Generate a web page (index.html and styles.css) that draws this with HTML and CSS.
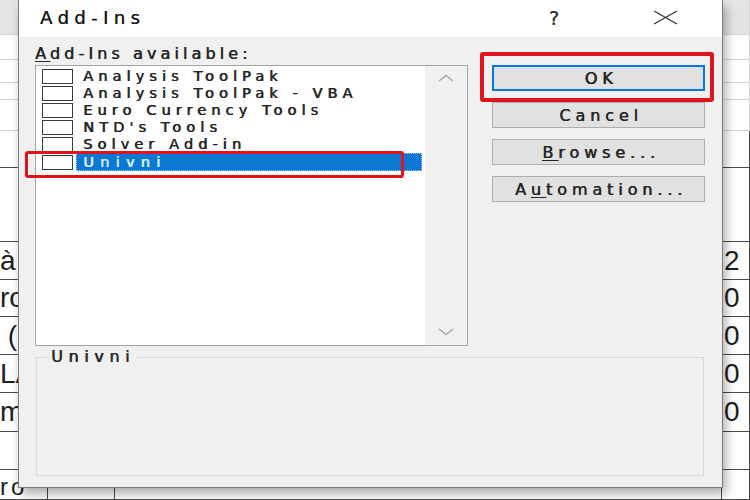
FILE: index.html
```html
<!DOCTYPE html>
<html>
<head>
<meta charset="utf-8">
<link rel="stylesheet" href="styles.css">
</head>
<body>
<div class="sheet">
  <div class="c ca hd"></div><div class="c cb hd"></div><div class="c cc hd"></div><div class="c cd hd"></div>
  <div class="c ca"></div><div class="c cb"></div><div class="c cc"></div><div class="c cd"></div>
  <div class="c ca"></div><div class="c cb"></div><div class="c cc"></div><div class="c cd"></div>
  <div class="c ca"></div><div class="c cb"></div><div class="c cc"></div><div class="c cd"></div>
  <div class="c ca"></div><div class="c cb"></div><div class="c cc"></div><div class="c cd"></div>
  <div class="c ca dk"></div><div class="c cb dk"></div><div class="c cc dk"></div><div class="c cd dk"></div>
  <div class="c ca dk"></div><div class="c cb dk"></div><div class="c cc dk"></div><div class="c cd dk"></div>
  <div class="c ca dk">à</div><div class="c cb dk"></div><div class="c cc dk"></div><div class="c cd dk">2</div>
  <div class="c ca dk">ro</div><div class="c cb dk"></div><div class="c cc dk"></div><div class="c cd dk">0</div>
  <div class="c ca dk">&nbsp;(</div><div class="c cb dk"></div><div class="c cc dk"></div><div class="c cd dk">0</div>
  <div class="c ca dk">LA</div><div class="c cb dk"></div><div class="c cc dk"></div><div class="c cd dk">0</div>
  <div class="c ca dk">m</div><div class="c cb dk"></div><div class="c cc dk"></div><div class="c cd dk">0</div>
  <div class="c ca dk"></div><div class="c cb dk"></div><div class="c cc dk"></div><div class="c cd dk"></div>
  <div class="c ca dk last">ro</div><div class="c cb dk"></div><div class="c cc dk"></div><div class="c cd dk"></div>
</div>

<div class="dialog">
  <div class="titlebar">
    <span class="title">Add-Ins</span>
    <span class="help">?</span>
    <svg class="close" width="25" height="15" viewBox="0 0 25 15">
      <path d="M1 1 L24 14 M24 1 L1 14" stroke="#333" stroke-width="1.3" fill="none"/>
    </svg>
  </div>
  <div class="body">
    <div class="main">
      <div class="left">
        <div class="label"><u>A</u>dd-Ins available:</div>
        <div class="listbox">
          <div class="items">
            <div class="item"><span class="box"></span><span class="name">Analysis ToolPak</span></div>
            <div class="item"><span class="box"></span><span class="name">Analysis ToolPak - VBA</span></div>
            <div class="item"><span class="box"></span><span class="name">Euro Currency Tools</span></div>
            <div class="item"><span class="box"></span><span class="name">NTD's Tools</span></div>
            <div class="item"><span class="box"></span><span class="name">Solver Add-in</span></div>
            <div class="item selected"><span class="box"></span><span class="name">Univni</span></div>
          </div>
          <div class="scrollbar">
            <svg width="16" height="8" viewBox="0 0 16 8"><polyline points="1,7 8,1.5 15,7" fill="none" stroke="#a8a8a8" stroke-width="1.5"/></svg>
            <svg width="16" height="8" viewBox="0 0 16 8"><polyline points="1,1 8,6.5 15,1" fill="none" stroke="#a8a8a8" stroke-width="1.5"/></svg>
          </div>
        </div>
      </div>
      <div class="buttons">
        <button class="btn default">OK</button>
        <button class="btn">Cancel</button>
        <button class="btn"><u>B</u>rowse...</button>
        <button class="btn">A<u>u</u>tomation...</button>
      </div>
    </div>
    <fieldset class="desc">
      <legend>Univni</legend>
    </fieldset>
  </div>
</div>

<div class="mark mark-univni"></div>
<div class="mark mark-ok"></div>
</body>
</html>
```

FILE: styles.css
```css
html, body {
  margin: 0;
  padding: 0;
}
body {
  width: 750px;
  height: 500px;
  overflow: hidden;
  position: relative;
  background: #ffffff;
  font-family: "DejaVu Sans", Verdana, sans-serif;
}

/* spreadsheet behind the dialog */
.sheet {
  display: grid;
  grid-template-columns: 48px 67px 1fr 28px;
  grid-template-rows: 35px 25px 23px 17px 31px 37px 74px 38px 37px 38px 38px 39px 38px 30px;
  width: 750px;
  height: 500px;
  font-family: "Liberation Sans", Arial, sans-serif;
  font-size: 28px;
  color: #1e1e1e;
}
.c {
  box-sizing: border-box;
  border-bottom: 1px solid #d2d2d2;
  border-right: 1px solid #d2d2d2;
  display: flex;
  align-items: center;
  white-space: nowrap;
  overflow: hidden;
  line-height: 1;
}
.c.hd {
  background: #e4e4e4;
}
.c.dk {
  border-bottom-color: #4a4a4a;
  border-right-color: #4a4a4a;
}
.ca.last {
  align-items: flex-start;
  padding-top: 5px;
  font-size: 24px;
  letter-spacing: 3px;
}
.cd {
  padding-left: 2px;
}

/* dialog window */
.dialog {
  position: absolute;
  left: 18px;
  top: 0;
  width: 705px;
  height: 488px;
  box-sizing: border-box;
  border: 1px solid #7c7c7c;
  border-top: none;
  background: #f0f0f0;
  box-shadow: 3px 6px 10px rgba(0, 0, 0, 0.32);
  display: flex;
  flex-direction: column;
  color: #262626;
}
.titlebar {
  height: 37px;
  flex: none;
  background: #ffffff;
  display: flex;
  align-items: center;
  padding-left: 21px;
}
.title {
  flex: 1;
  font-size: 18px;
  letter-spacing: 5.4px;
  color: #1a1a1a;
  padding-bottom: 2px;
  text-shadow: 0.3px 0 0 currentColor;
}
.help {
  width: 24px;
  text-align: center;
  font-size: 19px;
  color: #333;
  margin-right: 87px;
  padding-bottom: 2px;
  text-shadow: 0.4px 0 0 currentColor;
}
.close {
  margin-right: 44px;
  margin-bottom: 3px;
}

.body {
  flex: 1;
  display: flex;
  flex-direction: column;
  padding: 8px 17px 0 16px;
}
.main {
  display: flex;
  gap: 24px;
}
.left {
  display: flex;
  flex-direction: column;
}
.label {
  font-size: 16px;
  line-height: 18px;
  letter-spacing: 4.1px;
  margin-bottom: 2px;
  text-shadow: 0.6px 0 0 currentColor;
}
.label u, .btn u {
  text-decoration-thickness: 1px;
  text-underline-offset: 2px;
}
.listbox {
  width: 433px;
  height: 281px;
  box-sizing: border-box;
  border: 1px solid #a3a3a3;
  background: #ffffff;
  display: flex;
}
.items {
  flex: 1;
  padding-top: 2px;
}
.item {
  height: 17px;
  display: flex;
  align-items: center;
}
.item.selected {
  height: 18px;
}
.box {
  width: 31px;
  height: 15px;
  box-sizing: border-box;
  border: 1px solid #3a3a3a;
  background: #ffffff;
  margin-left: 6px;
  flex: none;
}
.name {
  flex: 1;
  margin-left: 3px;
  margin-right: 3px;
  padding-left: 7px;
  font-size: 14.5px;
  line-height: 17px;
  letter-spacing: 5.1px;
  white-space: nowrap;
  color: #262626;
  text-shadow: 0.7px 0 0 currentColor;
}
.item.selected .name {
  background: #0a78d4;
  color: #d6ecff;
  height: 18px;
  line-height: 18px;
  box-sizing: border-box;
  outline: 1px dotted #9ccaf0;
  outline-offset: -1px;
  letter-spacing: 6.3px;
}
.scrollbar {
  width: 42px;
  background: #f0f0f0;
  display: flex;
  flex-direction: column;
  justify-content: space-between;
  align-items: center;
  padding: 8px 0 9px;
  box-sizing: border-box;
}

.buttons {
  width: 213px;
  margin-top: 20px;
  display: flex;
  flex-direction: column;
  gap: 11px;
}
.btn {
  height: 26px;
  box-sizing: border-box;
  background: #e1e1e1;
  border: 1px solid #adadad;
  font-family: "DejaVu Sans", Verdana, sans-serif;
  font-size: 16px;
  letter-spacing: 4.9px;
  color: #262626;
  padding: 0 0 0 5px;
  text-shadow: 0.6px 0 0 currentColor;
}
.btn.default {
  border: 2px solid #0a78d4;
  box-shadow: inset 0 0 0 1px #cde6f7;
}

.desc {
  margin: 3px 1px 11px 1px;
  height: 127px;
  box-sizing: border-box;
  border: 1px solid #d8d8d8;
  padding: 0 12px;
  min-width: 0;
}
.desc legend {
  padding: 0 2px;
  font-size: 16px;
  line-height: 16px;
  letter-spacing: 5.6px;
  color: #2a2a2a;
  text-shadow: 0.6px 0 0 currentColor;
}

/* red annotation frames */
.mark {
  position: absolute;
  box-sizing: border-box;
  border: 3px solid #e0141c;
  border-radius: 3px;
}
.mark-univni {
  left: 25px;
  top: 151px;
  width: 379px;
  height: 27px;
}
.mark-ok {
  left: 480px;
  top: 52px;
  width: 234px;
  height: 50px;
  border-width: 4px;
}
```
